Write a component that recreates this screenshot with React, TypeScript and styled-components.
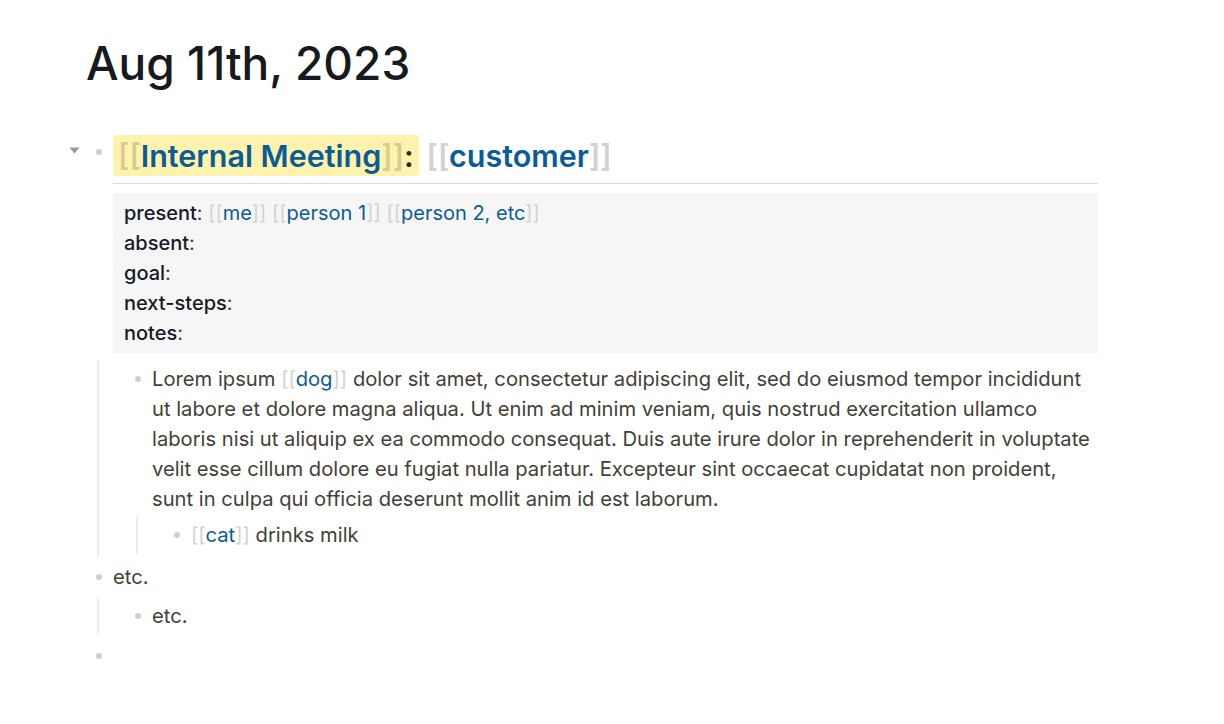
import * as React from 'react'
import styled, { createGlobalStyle } from 'styled-components'

const GlobalStyle = createGlobalStyle`
  html, body {
    margin: 0;
    background: #ffffff;
  }
  body {
    font-family: Inter, "Noto Sans", "Liberation Sans", sans-serif;
    color: #433f38;
    -webkit-font-smoothing: antialiased;
  }
`

const Page = styled.main`
  width: 1014px;
  padding: 34px 0 40px 84px;
`

const Title = styled.h1`
  margin: 0 0 39px 2px;
  font-size: 46px;
  font-weight: 500;
  line-height: 58px;
  color: #16191d;
`

const Block = styled.div`
  padding: 2px 0;
`

const Row = styled.div`
  display: flex;
  padding: 2px 0;
`

const BulletCol = styled.div<{ $h?: number }>`
  position: relative;
  flex: none;
  width: 29px;
  height: ${p => p.$h || 30}px;
  display: flex;
  align-items: center;
  justify-content: center;
`

const Dot = styled.span`
  width: 6px;
  height: 6px;
  border-radius: 50%;
  background: #cfcfcf;
`

const Caret = styled.svg`
  position: absolute;
  left: -15px;
  top: 12px;
`

const Content = styled.div`
  flex: 1;
  min-width: 0;
  min-height: 30px;
  font-size: 20.2px;
  line-height: 30px;
  color: #433f38;
`

const Children = styled.div<{ $top?: number }>`
  margin: ${p => p.$top || 0}px 0 0 13px;
  padding-left: 24px;
  border-left: 2px solid #ececec;
`

const Heading = styled.h2`
  margin: 0;
  padding-bottom: 7px;
  border-bottom: 1px solid #dcdcdc;
  font-size: 30.5px;
  font-weight: 600;
  line-height: 41px;
  color: #262626;
`

const Highlight = styled.span`
  display: inline-block;
  padding: 0 5px;
  border-radius: 4px;
  background: #fdf3ad;
`

const Bracket = styled.span<{ $marked?: boolean }>`
  color: ${p => (p.$marked ? 'rgba(120, 110, 80, 0.28)' : '#d2d2d2')};
`

const RefLabel = styled.span`
  color: #0b5c96;
`

const Props = styled.div`
  margin-top: 9px;
  padding: 5px 11px;
  background: #f6f6f6;
  font-size: 20px;
  line-height: 30px;
  color: #433f38;
`

const PropKey = styled.span`
  font-weight: 500;
  color: #151a26;
`

const Ref = ({ children, marked }: { children: React.ReactNode; marked?: boolean }) => (
  <>
    <Bracket $marked={marked}>[[</Bracket>
    <RefLabel>{children}</RefLabel>
    <Bracket $marked={marked}>]]</Bracket>
  </>
)

const Bullet = ({ h, caret }: { h?: number; caret?: boolean }) => (
  <BulletCol $h={h}>
    {caret && (
      <Caret width="11" height="7" viewBox="0 0 11 7">
        <path d="M0.5 0.5 L10.5 0.5 L5.5 6.5 Z" fill="#9a9a9a" />
      </Caret>
    )}
    <Dot />
  </BulletCol>
)

const lorem =
  ' dolor sit amet, consectetur adipiscing elit, sed do eiusmod tempor incididunt ut labore et dolore magna aliqua. Ut enim ad minim veniam, quis nostrud exercitation ullamco laboris nisi ut aliquip ex ea commodo consequat. Duis aute irure dolor in reprehenderit in voluptate velit esse cillum dolore eu fugiat nulla pariatur. Excepteur sint occaecat cupidatat non proident, sunt in culpa qui officia deserunt mollit anim id est laborum.'

export default function App() {
  return (
    <>
      <GlobalStyle />
      <Page>
        <Title>Aug 11th, 2023</Title>

        <Block>
          <Row>
            <Bullet h={34} caret />
            <Content>
              <Heading>
                <Highlight>
                  <Ref marked>Internal Meeting</Ref>:
                </Highlight>{' '}
                <Ref>customer</Ref>
              </Heading>
              <Props>
                <div>
                  <PropKey>present</PropKey>: <Ref>me</Ref> <Ref>person 1</Ref>{' '}
                  <Ref>person 2, etc</Ref>
                </div>
                <div>
                  <PropKey>absent</PropKey>:
                </div>
                <div>
                  <PropKey>goal</PropKey>:
                </div>
                <div>
                  <PropKey>next-steps</PropKey>:
                </div>
                <div>
                  <PropKey>notes</PropKey>:
                </div>
              </Props>
            </Content>
          </Row>
          <Children $top={5}>
            <Block>
              <Row>
                <Bullet />
                <Content>
                  Lorem ipsum <Ref>dog</Ref>
                  {lorem}
                </Content>
              </Row>
              <Children>
                <Block>
                  <Row>
                    <Bullet />
                    <Content>
                      <Ref>cat</Ref> drinks milk
                    </Content>
                  </Row>
                </Block>
              </Children>
            </Block>
          </Children>
        </Block>

        <Block>
          <Row>
            <Bullet />
            <Content>etc.</Content>
          </Row>
          <Children $top={3}>
            <Block>
              <Row>
                <Bullet />
                <Content>etc.</Content>
              </Row>
            </Block>
          </Children>
        </Block>

        <Block>
          <Row>
            <Bullet />
            <Content />
          </Row>
        </Block>
      </Page>
    </>
  )
}
